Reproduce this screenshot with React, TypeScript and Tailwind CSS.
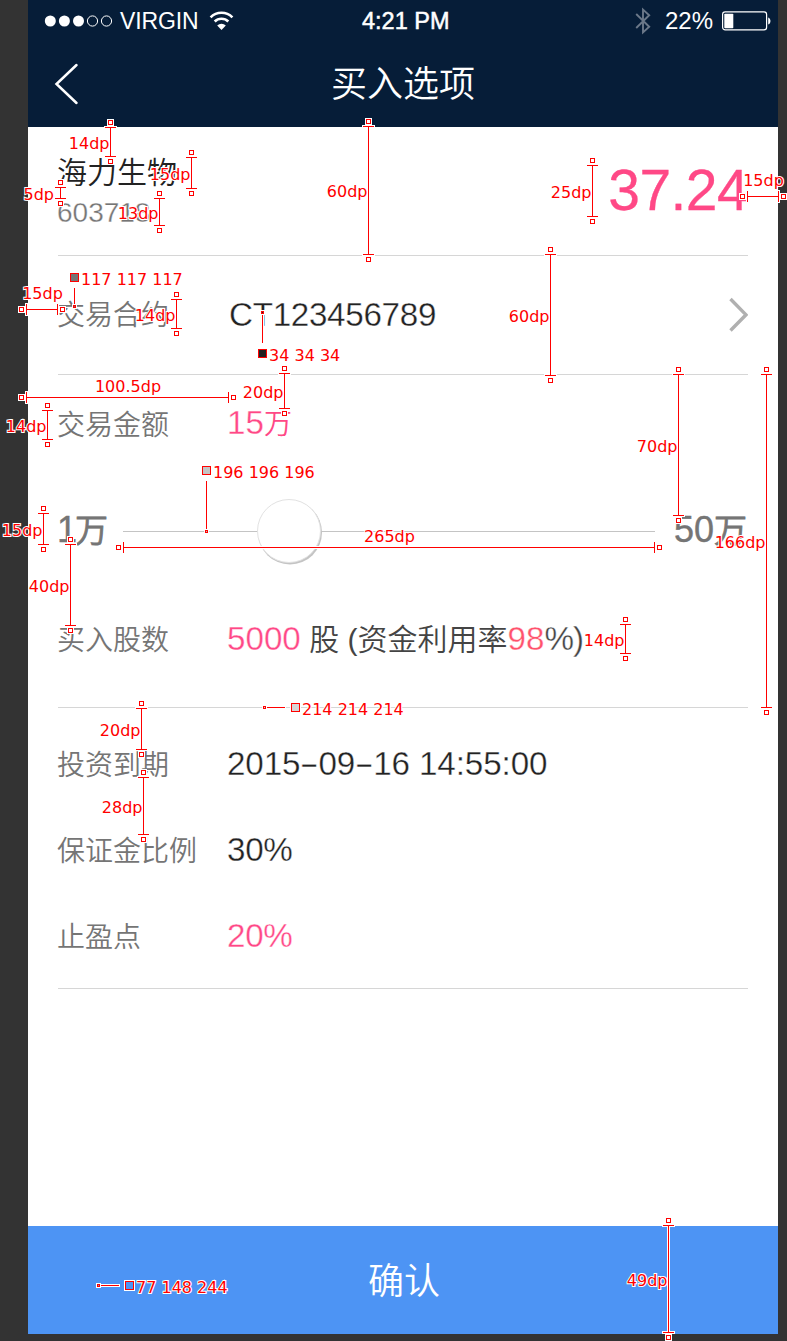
import type { ReactNode } from 'react';

const RED = '#ff0000';

type Vertical = { x: number; y1: number; y2: number; label: string; gap?: number };
type Horizontal = { y: number; x1: number; x2: number; label: string; lift: number };
type Swatch = {
  x: number;
  y: number;
  color: string;
  label: string;
  line: [number, number, number, number];
  dot: [number, number];
};

const verticals: Vertical[] = [
  { x: 110, y1: 127, y2: 156, label: '14dp' },
  { x: 191, y1: 157, y2: 188, label: '15dp' },
  { x: 60, y1: 187, y2: 198, label: '5dp', gap: 6 },
  { x: 159, y1: 198, y2: 225, label: '13dp' },
  { x: 368, y1: 126, y2: 254, label: '60dp' },
  { x: 592, y1: 165, y2: 216, label: '25dp' },
  { x: 176, y1: 299, y2: 328, label: '14dp' },
  { x: 550, y1: 254, y2: 375, label: '60dp' },
  { x: 284, y1: 373, y2: 408, label: '20dp' },
  { x: 47, y1: 410, y2: 439, label: '14dp' },
  { x: 678, y1: 374, y2: 515, label: '70dp' },
  { x: 766, y1: 374, y2: 707, label: '166dp' },
  { x: 43, y1: 513, y2: 544, label: '15dp' },
  { x: 70, y1: 544, y2: 625, label: '40dp' },
  { x: 625, y1: 624, y2: 653, label: '14dp' },
  { x: 141, y1: 708, y2: 749, label: '20dp' },
  { x: 143, y1: 777, y2: 834, label: '28dp' },
  { x: 668, y1: 1225, y2: 1332, label: '49dp' },
];

const horizontals: Horizontal[] = [
  { y: 196, x1: 747, x2: 778, label: '15dp', lift: 10 },
  { y: 309, x1: 26, x2: 57, label: '15dp', lift: 10 },
  { y: 397, x1: 26, x2: 228, label: '100.5dp', lift: 5 },
  { y: 547, x1: 123, x2: 654, label: '265dp', lift: 5 },
];

const swatches: Swatch[] = [
  { x: 70, y: 273, color: '#757575', label: '117 117 117', line: [74, 288, 74, 305], dot: [74, 306] },
  { x: 258, y: 349, color: '#222222', label: '34 34 34', line: [262, 314, 262, 343], dot: [262, 312] },
  { x: 202, y: 466, color: '#c4c4c4', label: '196 196 196', line: [206, 481, 206, 530], dot: [206, 531] },
  { x: 291, y: 703, color: '#d6d6d6', label: '214 214 214', line: [266, 707, 285, 707], dot: [264, 707] },
  { x: 125, y: 1281, color: '#4d94f4', label: '77 148 244', line: [100, 1285, 119, 1285], dot: [98, 1285] },
];

function Bar({ x, y, w, h }: { x: number; y: number; w: number; h: number }) {
  return <rect x={x} y={y} width={w} height={h} fill={RED} />;
}

function Halo({ x, y, w, h }: { x: number; y: number; w: number; h: number }) {
  return <rect x={x - 1} y={y - 1} width={w + 2} height={h + 2} fill="#fff" />;
}

function Knot({ x, y }: { x: number; y: number }) {
  return (
    <g>
      <rect x={x - 3} y={y - 3} width={7} height={7} fill="#fff" />
      <rect x={x - 1.5} y={y - 1.5} width={4} height={4} fill="#fff" stroke={RED} />
    </g>
  );
}

function Note({ x, y, anchor, children }: { x: number; y: number; anchor: 'left' | 'right' | 'center'; children: ReactNode }) {
  const shift = anchor === 'right' ? '-100%' : anchor === 'center' ? '-50%' : '0';
  return (
    <span
      className="absolute whitespace-pre font-['DejaVu_Sans',sans-serif] text-[16px] font-normal leading-[20px] text-[#ff0000] [-webkit-text-stroke:2px_white] [paint-order:stroke]"
      style={{ left: x, top: y - 15, transform: `translateX(${shift})` }}
    >
      {children}
    </span>
  );
}

function Annotations() {
  return (
    <div className="pointer-events-none absolute inset-0 overflow-hidden">
      <svg className="absolute inset-0" width="787" height="1341" viewBox="0 0 787 1341" shapeRendering="crispEdges">
        {verticals.map((m, i) => (
          <g key={i}>
            <Halo x={m.x} y={m.y1} w={1} h={m.y2 - m.y1 + 1} />
            <Halo x={m.x - 5} y={m.y1} w={11} h={1} />
            <Halo x={m.x - 5} y={m.y2} w={11} h={1} />
            <Bar x={m.x} y={m.y1} w={1} h={m.y2 - m.y1 + 1} />
            <Bar x={m.x - 5} y={m.y1} w={11} h={1} />
            <Bar x={m.x - 5} y={m.y2} w={11} h={1} />
            <Knot x={m.x} y={m.y1 - 5} />
            <Knot x={m.x} y={m.y2 + 5} />
          </g>
        ))}
        {horizontals.map((m, i) => (
          <g key={i}>
            <Halo x={m.x1} y={m.y} w={m.x2 - m.x1 + 1} h={1} />
            <Halo x={m.x1} y={m.y - 5} w={1} h={11} />
            <Halo x={m.x2} y={m.y - 5} w={1} h={11} />
            <Bar x={m.x1} y={m.y} w={m.x2 - m.x1 + 1} h={1} />
            <Bar x={m.x1} y={m.y - 5} w={1} h={11} />
            <Bar x={m.x2} y={m.y - 5} w={1} h={11} />
            <Knot x={m.x1 - 5} y={m.y} />
            <Knot x={m.x2 + 5} y={m.y} />
          </g>
        ))}
        {swatches.map((s, i) => {
          const [x1, y1, x2, y2] = s.line;
          return (
            <g key={i}>
              <Halo x={x1} y={y1} w={x2 - x1 || 1} h={y2 - y1 || 1} />
              <Bar x={x1} y={y1} w={x2 - x1 || 1} h={y2 - y1 || 1} />
              <rect x={s.dot[0] - 2} y={s.dot[1] - 2} width={5} height={5} fill="#fff" />
              <rect x={s.dot[0] - 1} y={s.dot[1] - 1} width={3} height={3} fill={RED} />
              <rect x={s.dot[0]} y={s.dot[1]} width={1} height={1} fill={s.color} />
              <rect x={s.x - 1} y={s.y - 1} width={11} height={11} fill="#fff" />
              <rect x={s.x + 0.5} y={s.y + 0.5} width={8} height={8} fill={s.color} stroke={RED} />
            </g>
          );
        })}
      </svg>
      {verticals.map((m, i) => (
        <Note key={i} x={m.x - (m.gap ?? 0.5)} y={Math.round((m.y1 + m.y2) / 2 + 7)} anchor="right">
          {m.label}
        </Note>
      ))}
      {horizontals.map((m, i) => (
        <Note key={i} x={(m.x1 + m.x2) / 2 + 1} y={m.y - m.lift} anchor="center">
          {m.label}
        </Note>
      ))}
      {swatches.map((s, i) => (
        <Note key={i} x={s.x + 11} y={s.y + 12} anchor="left">
          {s.label}
        </Note>
      ))}
    </div>
  );
}

function StatusBar() {
  return (
    <div className="flex h-[41px] items-center text-white">
      <svg className="ml-[16px] shrink-0" width="70" height="14" viewBox="0 0 70 14">
        <g fill="#fff">
          <circle cx="6.3" cy="7" r="5.5" />
          <circle cx="20.4" cy="7" r="5.5" />
          <circle cx="34.5" cy="7" r="5.5" />
        </g>
        <g fill="none" stroke="#fff">
          <circle cx="48.5" cy="7" r="5.1" />
          <circle cx="62.5" cy="7" r="5.1" />
        </g>
      </svg>
      <span className="ml-[6px] w-[80px] pt-[2px] text-[23px] leading-none tracking-[-0.1px]">VIRGIN</span>
      <svg className="ml-[9px] shrink-0" width="25" height="20" viewBox="0 0 25 20">
        <g fill="none" stroke="#fff" strokeWidth="2.6">
          <path d="M1.6 6.4a15.2 15.2 0 0 1 21.8 0" />
          <path d="M5.7 10.5a9.6 9.6 0 0 1 13.6 0" />
        </g>
        <path d="M12.5 19l-4.3-4.4a6.1 6.1 0 0 1 8.6 0z" fill="#fff" />
      </svg>
      <span className="ml-[128px] w-[92px] whitespace-nowrap pt-[2px] text-[23.5px] leading-none [-webkit-text-stroke:0.5px_white]">4:21 PM</span>
      <svg className="ml-[181px] shrink-0" width="16" height="28" viewBox="0 0 16 28">
        <path d="M1.2 7l13 12.8L8 25.4V2.6l6.2 5.6L1.2 21" fill="none" stroke="#6b7889" strokeWidth="1.9" />
      </svg>
      <span className="ml-[14px] w-[50px] pt-[1px] text-[24px] leading-none">22%</span>
      <svg className="ml-[7px] shrink-0" width="50" height="20" viewBox="0 0 50 20">
        <rect x="0.6" y="0.9" width="44" height="18" rx="2.6" fill="none" stroke="#fff" strokeWidth="1.2" />
        <rect x="2.3" y="2.8" width="9" height="14.4" rx="0.8" fill="#fff" />
        <path d="M46.2 6.4c3 1 3 6 0 7z" fill="#fff" />
      </svg>
    </div>
  );
}

function Row({ label, height, children }: { label: string; height: string; children: ReactNode }) {
  return (
    <div className={`-ml-px flex items-center ${height}`}>
      <span className="w-[170px] shrink-0 pt-[2px] text-[28px] leading-[40px] text-[#757575]">{label}</span>
      <span className="flex items-baseline whitespace-pre text-[33.2px] leading-[40px] text-[#222] [-webkit-text-stroke:0.35px_white]">
        {children}
      </span>
    </div>
  );
}

function Dash() {
  return <span className="inline-block w-[18px] scale-x-[1.8] text-center">-</span>;
}

export default function App() {
  return (
    <div className="relative h-[1341px] w-[787px] overflow-hidden bg-[#333] font-['Liberation_Sans','Noto_Sans_CJK_SC',sans-serif] font-[350]">
      <div className="ml-[28px] flex h-[1334px] w-[750px] flex-col bg-white">
        <header className="h-[127px] shrink-0 bg-[#061d38]">
          <StatusBar />
          <div className="flex h-[86px] items-center">
            <svg className="ml-[26px] shrink-0" width="25" height="42" viewBox="0 0 25 42">
              <path d="M22.5 2L2.5 21l20 19" fill="none" stroke="#fff" strokeWidth="2.5" strokeLinecap="round" />
            </svg>
            <h1 className="ml-[252px] pt-[2px] text-[36px] leading-none font-[350] text-white">买入选项</h1>
          </div>
        </header>

        <section className="mx-[30px] flex h-[129px] shrink-0 justify-between border-b border-[#d6d6d6]">
          <div className="-ml-px flex flex-col pt-[26px]">
            <span className="text-[30px] leading-[40px] text-[#222]">海力生物</span>
            <span className="text-[28px] leading-[40px] text-[#757575] [-webkit-text-stroke:0.3px_white]">603718</span>
          </div>
          <span className="pt-[33px] text-[57px] leading-[60px] tracking-[-0.6px] text-[#ff4886] [-webkit-text-stroke:0.3px_#ff4886]">37.24</span>
        </section>

        <section className="mx-[30px] flex h-[119px] shrink-0 items-center justify-between border-b border-[#d6d6d6]">
          <Row label="交易合约" height="h-[118px]">
            <span className="ml-[2px] tracking-[-0.3px]">CT123456789</span>
          </Row>
          <svg width="20" height="36" viewBox="0 0 20 36">
            <path d="M2.5 2L18 17.8L2.5 33.5" fill="none" stroke="#b0b0b0" strokeWidth="3.4" />
          </svg>
        </section>

        <section className="mx-[30px] h-[333px] shrink-0 border-b border-[#d6d6d6]">
          <Row label="交易金额" height="h-[100px]">
            <span className="-mt-[2px] text-[#ff4886]">15<span className="text-[28px] [-webkit-text-stroke:0]">万</span></span>
          </Row>
          <div className="-ml-px flex h-[112px] items-center text-[#757575]">
            <span className="-mt-[2px] w-[66px] whitespace-nowrap text-[36px] leading-[40px] [-webkit-text-stroke:0.4px_#757575]">
              1<span className="-ml-[2px] text-[33px] [-webkit-text-stroke:0.8px_#757575]">万</span>
            </span>
            <div className="relative h-[65px] w-[532px] shrink-0">
              <div className="mt-[32px] h-px bg-[#c4c4c4]" />
              <div className="absolute top-0 left-[134px] size-[64px] rounded-full border border-[#e2e2e2] bg-white shadow-[1px_1.5px_0_0_#c4c4c4]" />
            </div>
            <span className="-mt-[2px] ml-[19px] whitespace-nowrap text-[36px] leading-[40px] [-webkit-text-stroke:0.4px_#757575]">
              50<span className="text-[33px] [-webkit-text-stroke:0.8px_#757575]">万</span>
            </span>
          </div>
          <Row label="买入股数" height="h-[106px]">
            <span className="-translate-y-px text-[#ff4886]">5000</span>
            <span className="-translate-y-px text-[30px] text-[#444] [-webkit-text-stroke:0]"> 股 (资金利用率</span>
            <span className="-translate-y-px text-[#ff526c]">98</span>
            <span className="-translate-y-px tracking-[-1px] text-[#444]">%)</span>
          </Row>
        </section>

        <section className="mx-[30px] h-[281px] shrink-0 border-b border-[#d6d6d6] pt-[14px]">
          <Row label="投资到期" height="h-[86px]">
            <span className="-translate-y-px tracking-[-0.1px]">2015<Dash />09<Dash />16 14:55:00</span>
          </Row>
          <Row label="保证金比例" height="h-[86px]">
            <span className="-translate-y-px tracking-[-0.3px]">30%</span>
          </Row>
          <Row label="止盈点" height="h-[86px]">
            <span className="-translate-y-px tracking-[-0.3px] text-[#ff4886]">20%</span>
          </Row>
        </section>

        <button className="mt-auto h-[108px] w-full shrink-0 bg-[#4d94f4] pt-[4px] pl-[2px] text-[36px] text-white">确认</button>
      </div>
      <Annotations />
    </div>
  );
}
